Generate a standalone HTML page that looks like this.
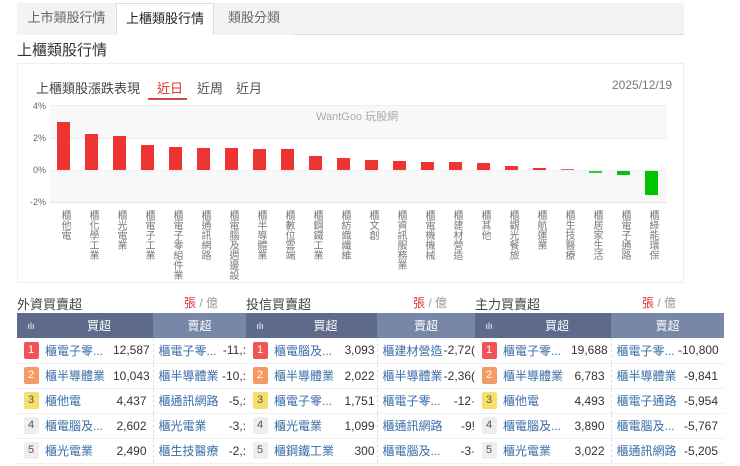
<!DOCTYPE html>
<html><head><meta charset="utf-8"><style>
*{margin:0;padding:0;box-sizing:border-box}
body{width:740px;height:466px;background:#fff;font-family:"Liberation Sans","Noto Sans CJK TC",sans-serif;position:relative;overflow:hidden;color:#333}
.abs{position:absolute}
.tab{position:absolute;top:3px;height:32px;line-height:30px;font-size:13px;color:#666;text-align:center}
.lbl{position:absolute;top:210px;writing-mode:vertical-rl;white-space:nowrap;font-size:10px;color:#777;line-height:12px;width:12px;height:80px}
.bar{position:absolute;width:13px}
table{border-collapse:collapse;position:absolute;top:313px;font-size:12px;table-layout:fixed}
th{height:25px;color:#fff;font-weight:normal;font-size:12px}
td{height:25px;border-bottom:1px solid #f0f0f0;white-space:nowrap;overflow:hidden}
.nm{color:#3a6ea8}
.sl{padding-left:5px;border-left:1px dashed #e0e0e0}
.rk{display:inline-block;width:15px;height:17px;line-height:17px;text-align:center;font-size:11px;border-radius:2px}
.r1{background:#f05555;color:#fff}.r2{background:#f59a64;color:#fff}.r3{background:#f7e06a;color:#555}.r4{background:#eee;color:#555}
.sec{position:absolute;top:294px;font-size:13px;color:#444}
.unit{position:absolute;top:294px;font-size:12px;color:#999}
.unit b{color:#e03030;font-weight:normal;border-bottom:2px solid #e03030;padding-bottom:3px}
.n{text-align:right;padding-right:6px;overflow:hidden}
</style></head><body>
<div class="abs" style="left:17px;top:3px;width:667px;height:32px;border-bottom:1px solid #ddd"></div>
<div class="tab" style="left:17px;width:99px;background:#f3f3f3">上市類股行情</div>
<div class="tab" style="left:116px;width:98px;background:#fff;border:1px solid #ddd;border-bottom:1px solid #fff;color:#222">上櫃類股行情</div>
<div class="tab" style="left:214px;width:80px;background:#f3f3f3">類股分類</div>
<div class="abs" style="left:294px;top:3px;width:390px;height:31px;background:#f3f3f3"></div>
<div class="abs" style="left:17px;top:39px;font-size:15px;color:#333">上櫃類股行情</div>
<div class="abs" style="left:17px;top:63px;width:667px;height:220px;border:1px solid #eee"></div>
<div class="abs" style="left:36px;top:78px;font-size:13px;color:#444">上櫃類股漲跌表現</div>
<div class="abs" style="left:157px;top:78px;font-size:13px;color:#e03030">近日</div>
<div class="abs" style="left:148px;top:98px;width:39px;height:2px;background:#d04848"></div>
<div class="abs" style="left:197px;top:78px;font-size:13px;color:#555">近周</div>
<div class="abs" style="left:236px;top:78px;font-size:13px;color:#555">近月</div>
<div class="abs" style="left:612px;top:78px;font-size:12px;color:#777">2025/12/19</div>
<div class="abs" style="left:50px;top:105px;width:617px;height:33px;background:#f8f8f8;border-top:1px solid #eee"></div>
<div class="abs" style="left:50px;top:138px;width:617px;height:1px;background:#eee"></div>
<div class="abs" style="left:50px;top:170px;width:617px;height:33px;background:#f8f8f8;border-top:1px solid #eee;border-bottom:1px solid #e4e4e4"></div>
<div class="abs" style="left:33px;top:101px;font-size:9px;color:#666">4%</div>
<div class="abs" style="left:33px;top:133px;font-size:9px;color:#666">2%</div>
<div class="abs" style="left:33px;top:165px;font-size:9px;color:#666">0%</div>
<div class="abs" style="left:30px;top:197px;font-size:9px;color:#666">-2%</div>
<div class="abs" style="left:316px;top:108px;font-size:11px;color:#aaa">WantGoo 玩股網</div>
<div class="bar" style="left:57px;top:122px;height:48px;background:#ee3333"></div>
<div class="bar" style="left:85px;top:134px;height:36px;background:#ee3333"></div>
<div class="bar" style="left:113px;top:136px;height:34px;background:#ee3333"></div>
<div class="bar" style="left:141px;top:145px;height:25px;background:#ee3333"></div>
<div class="bar" style="left:169px;top:147px;height:23px;background:#ee3333"></div>
<div class="bar" style="left:197px;top:148px;height:22px;background:#ee3333"></div>
<div class="bar" style="left:225px;top:148px;height:22px;background:#ee3333"></div>
<div class="bar" style="left:253px;top:149px;height:21px;background:#ee3333"></div>
<div class="bar" style="left:281px;top:149px;height:21px;background:#ee3333"></div>
<div class="bar" style="left:309px;top:156px;height:14px;background:#ee3333"></div>
<div class="bar" style="left:337px;top:158px;height:12px;background:#ee3333"></div>
<div class="bar" style="left:365px;top:160px;height:10px;background:#ee3333"></div>
<div class="bar" style="left:393px;top:161px;height:9px;background:#ee3333"></div>
<div class="bar" style="left:421px;top:162px;height:8px;background:#ee3333"></div>
<div class="bar" style="left:449px;top:162px;height:8px;background:#ee3333"></div>
<div class="bar" style="left:477px;top:163px;height:7px;background:#ee3333"></div>
<div class="bar" style="left:505px;top:166px;height:4px;background:#ee3333"></div>
<div class="bar" style="left:533px;top:168px;height:2px;background:#ee3333"></div>
<div class="bar" style="left:561px;top:169px;height:1px;background:#e07070"></div>
<div class="bar" style="left:589px;top:171px;height:2px;background:#33cc33"></div>
<div class="bar" style="left:617px;top:171px;height:4px;background:#11bb11"></div>
<div class="bar" style="left:645px;top:171px;height:24px;background:#00c400"></div>
<div class="lbl" style="left:58px">櫃他電</div>
<div class="lbl" style="left:86px">櫃化學工業</div>
<div class="lbl" style="left:114px">櫃光電業</div>
<div class="lbl" style="left:142px">櫃電子工業</div>
<div class="lbl" style="left:170px">櫃電子零組件業</div>
<div class="lbl" style="left:198px">櫃通訊網路</div>
<div class="lbl" style="left:226px">櫃電腦及週邊設</div>
<div class="lbl" style="left:254px">櫃半導體業</div>
<div class="lbl" style="left:282px">櫃數位雲端</div>
<div class="lbl" style="left:310px">櫃鋼鐵工業</div>
<div class="lbl" style="left:338px">櫃紡織纖維</div>
<div class="lbl" style="left:366px">櫃文創</div>
<div class="lbl" style="left:394px">櫃資訊服務業</div>
<div class="lbl" style="left:422px">櫃電機機械</div>
<div class="lbl" style="left:450px">櫃建材營造</div>
<div class="lbl" style="left:478px">櫃其他</div>
<div class="lbl" style="left:506px">櫃觀光餐旅</div>
<div class="lbl" style="left:534px">櫃航運業</div>
<div class="lbl" style="left:562px">櫃生技醫療</div>
<div class="lbl" style="left:590px">櫃居家生活</div>
<div class="lbl" style="left:618px">櫃電子通路</div>
<div class="lbl" style="left:646px">櫃綠能環保</div>

<div class="sec" style="left:17px">外資買賣超</div>
<div class="unit" style="left:184px"><b>張</b> / 億</div>
<div class="sec" style="left:246px">投信買賣超</div>
<div class="unit" style="left:413px"><b>張</b> / 億</div>
<div class="sec" style="left:475px">主力買賣超</div>
<div class="unit" style="left:642px"><b>張</b> / 億</div>

<table style="left:17px;width:229px">
<colgroup><col style="width:28px"><col style="width:68px"><col style="width:40px"><col style="width:66px"><col style="width:27px"></colgroup>
<tr><th style="background:#5d6a8c;font-size:9px">ılı</th><th style="background:#5d6a8c" colspan="2">買超</th><th style="background:#7886a8" colspan="2">賣超</th></tr>
<tr><td align="center"><span class="rk r1">1</span></td><td class="nm">櫃電子零...</td><td class="n">12,587</td><td class="nm sl">櫃電子零...</td><td class="n" style="padding-right:0">-11,:</td></tr>
<tr><td align="center"><span class="rk r2">2</span></td><td class="nm">櫃半導體業</td><td class="n">10,043</td><td class="nm sl">櫃半導體業</td><td class="n" style="padding-right:0">-10,:</td></tr>
<tr><td align="center"><span class="rk r3">3</span></td><td class="nm">櫃他電</td><td class="n">4,437</td><td class="nm sl">櫃通訊網路</td><td class="n" style="padding-right:0">-5,:</td></tr>
<tr><td align="center"><span class="rk r4">4</span></td><td class="nm">櫃電腦及...</td><td class="n">2,602</td><td class="nm sl">櫃光電業</td><td class="n" style="padding-right:0">-3,:</td></tr>
<tr><td align="center"><span class="rk r4">5</span></td><td class="nm">櫃光電業</td><td class="n">2,490</td><td class="nm sl">櫃生技醫療</td><td class="n" style="padding-right:0">-2,:</td></tr>
</table>
<table style="left:246px;width:229px">
<colgroup><col style="width:28px"><col style="width:68px"><col style="width:35px"><col style="width:66px"><col style="width:32px"></colgroup>
<tr><th style="background:#5d6a8c;font-size:9px">ılı</th><th style="background:#5d6a8c" colspan="2">買超</th><th style="background:#7886a8" colspan="2">賣超</th></tr>
<tr><td align="center"><span class="rk r1">1</span></td><td class="nm">櫃電腦及...</td><td class="n" style="padding-right:2px">3,093</td><td class="nm sl">櫃建材營造</td><td class="n" style="padding-right:0">-2,72(</td></tr>
<tr><td align="center"><span class="rk r2">2</span></td><td class="nm">櫃半導體業</td><td class="n" style="padding-right:2px">2,022</td><td class="nm sl">櫃半導體業</td><td class="n" style="padding-right:0">-2,36(</td></tr>
<tr><td align="center"><span class="rk r3">3</span></td><td class="nm">櫃電子零...</td><td class="n" style="padding-right:2px">1,751</td><td class="nm sl">櫃電子零...</td><td class="n" style="padding-right:0">-12·</td></tr>
<tr><td align="center"><span class="rk r4">4</span></td><td class="nm">櫃光電業</td><td class="n" style="padding-right:2px">1,099</td><td class="nm sl">櫃通訊網路</td><td class="n" style="padding-right:0">-9!</td></tr>
<tr><td align="center"><span class="rk r4">5</span></td><td class="nm">櫃鋼鐵工業</td><td class="n" style="padding-right:2px">300</td><td class="nm sl">櫃電腦及...</td><td class="n" style="padding-right:0">-3·</td></tr>
</table>
<table style="left:475px;width:249px">
<colgroup><col style="width:28px"><col style="width:68px"><col style="width:40px"><col style="width:67px"><col style="width:46px"></colgroup>
<tr><th style="background:#5d6a8c;font-size:9px">ılı</th><th style="background:#5d6a8c" colspan="2">買超</th><th style="background:#7886a8" colspan="2">賣超</th></tr>
<tr><td align="center"><span class="rk r1">1</span></td><td class="nm">櫃電子零...</td><td class="n">19,688</td><td class="nm sl">櫃電子零...</td><td class="n">-10,800</td></tr>
<tr><td align="center"><span class="rk r2">2</span></td><td class="nm">櫃半導體業</td><td class="n">6,783</td><td class="nm sl">櫃半導體業</td><td class="n">-9,841</td></tr>
<tr><td align="center"><span class="rk r3">3</span></td><td class="nm">櫃他電</td><td class="n">4,493</td><td class="nm sl">櫃電子通路</td><td class="n">-5,954</td></tr>
<tr><td align="center"><span class="rk r4">4</span></td><td class="nm">櫃電腦及...</td><td class="n">3,890</td><td class="nm sl">櫃電腦及...</td><td class="n">-5,767</td></tr>
<tr><td align="center"><span class="rk r4">5</span></td><td class="nm">櫃光電業</td><td class="n">3,022</td><td class="nm sl">櫃通訊網路</td><td class="n">-5,205</td></tr>
</table>
</body></html>
